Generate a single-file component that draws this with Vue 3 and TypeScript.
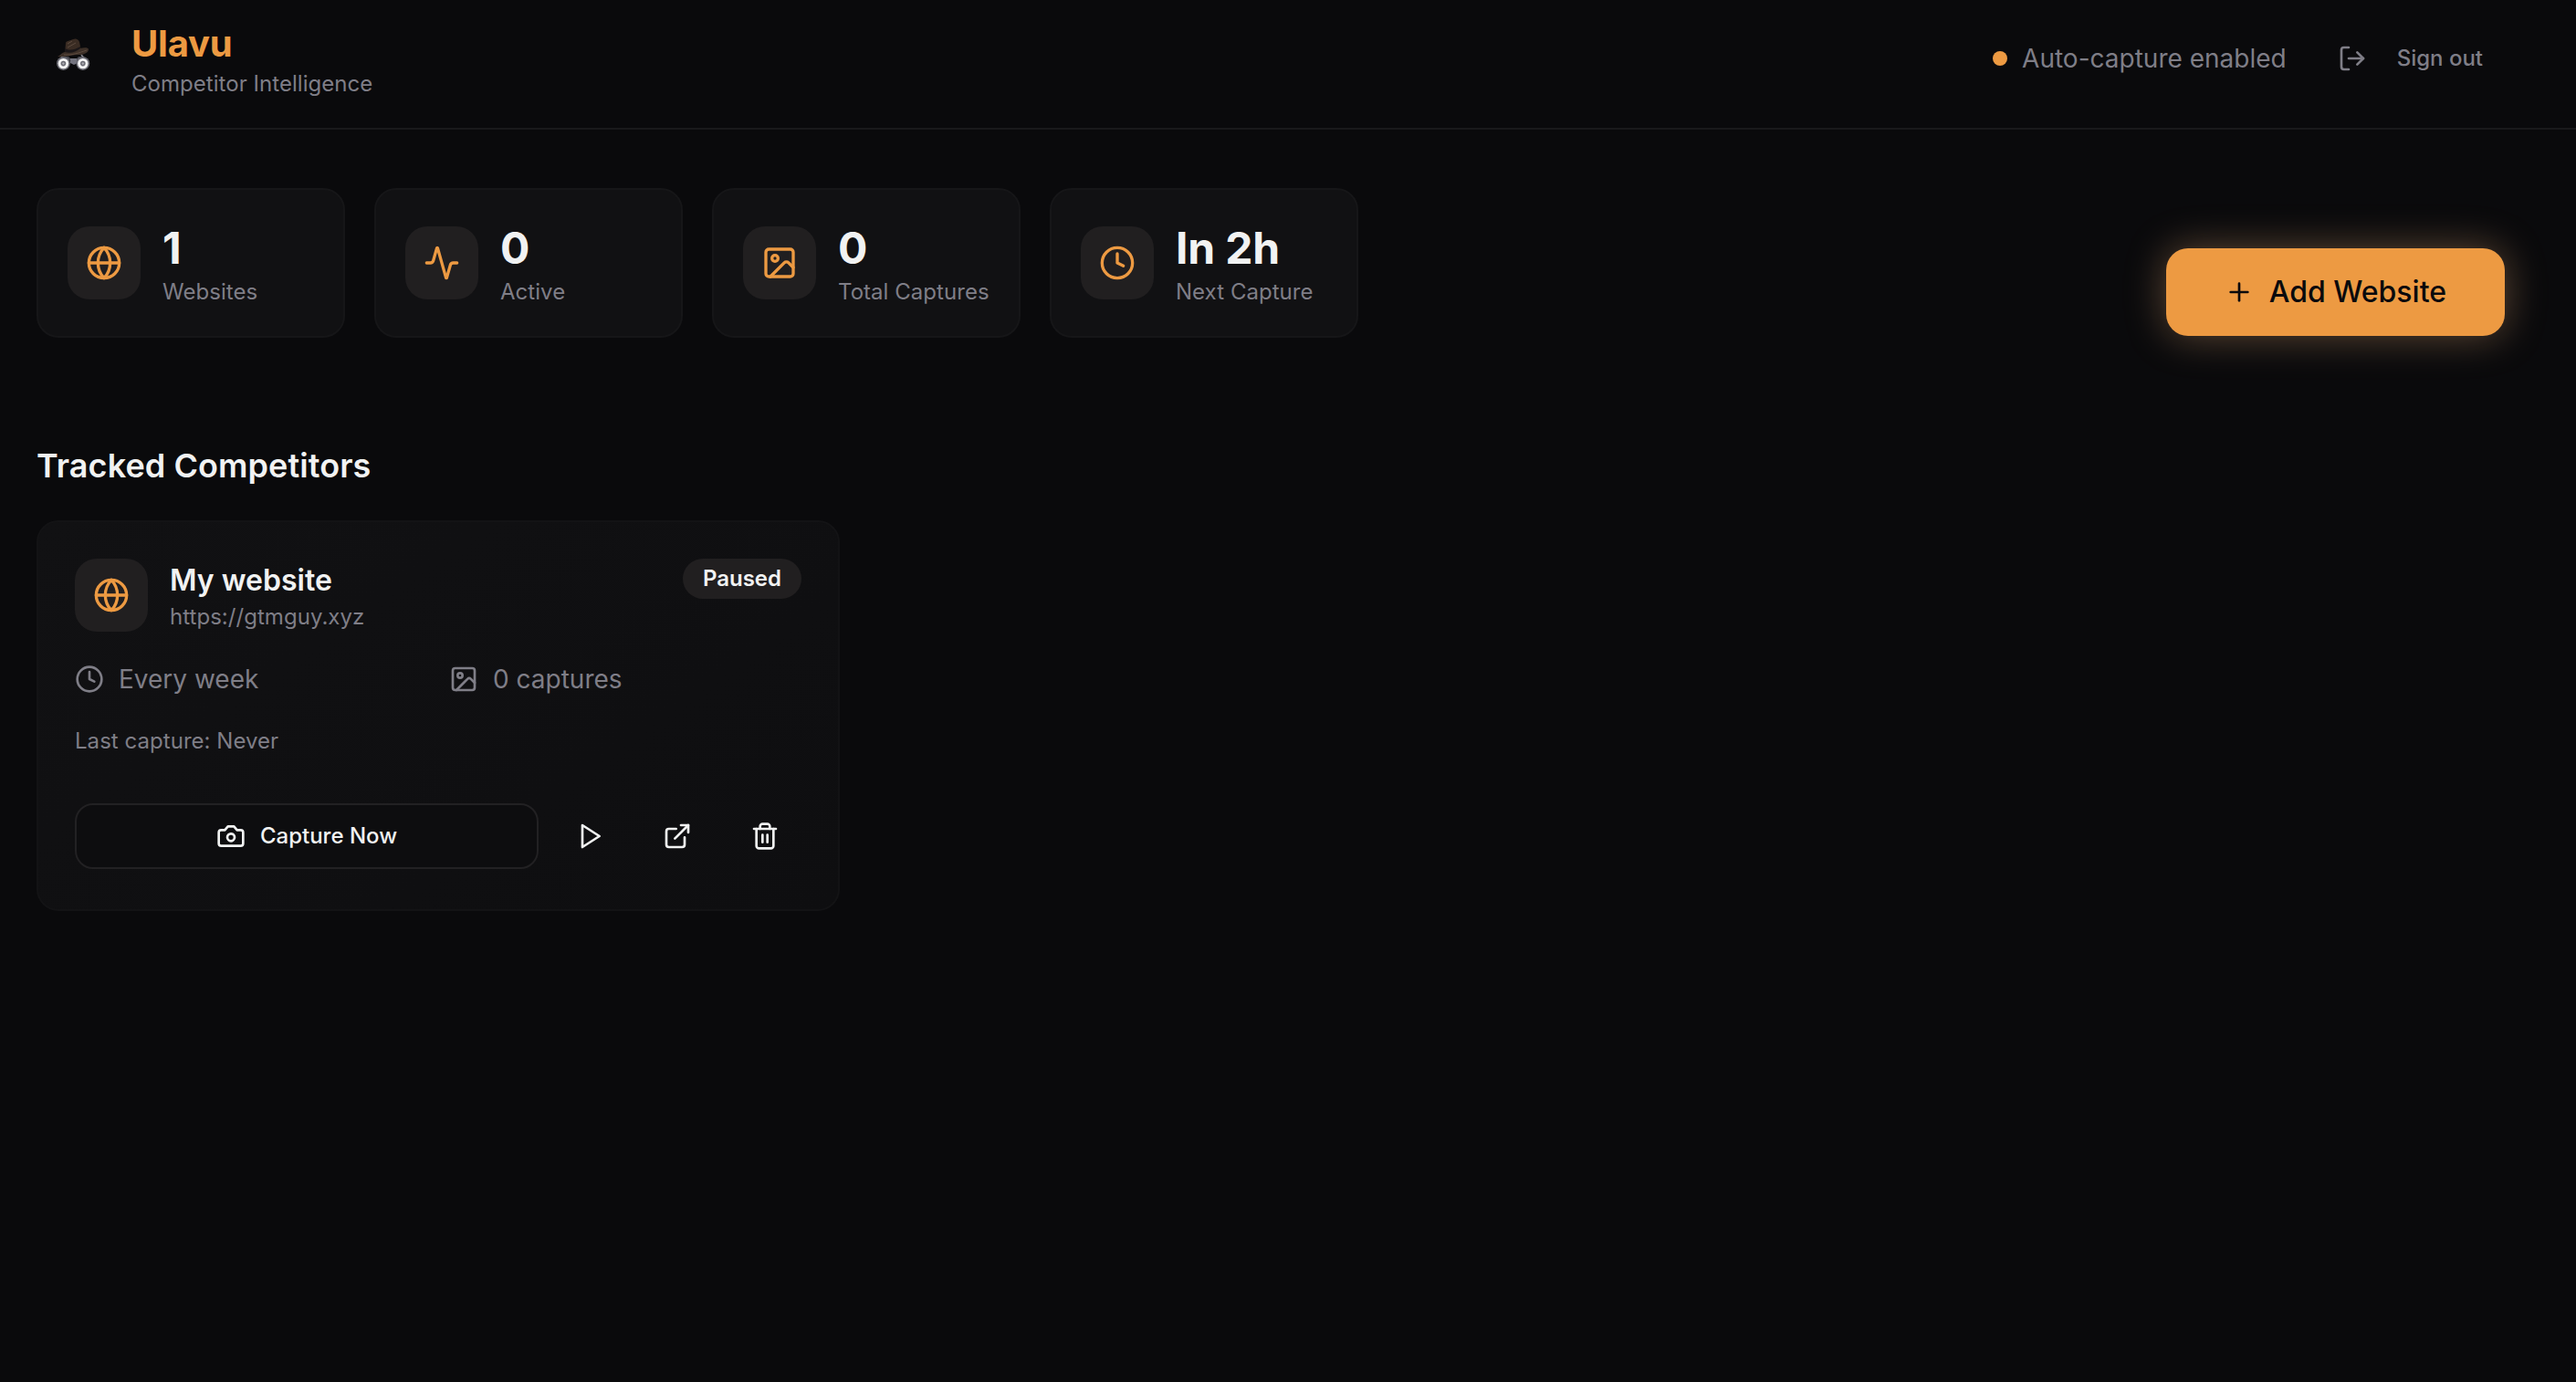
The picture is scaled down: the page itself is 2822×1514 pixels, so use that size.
<script setup lang="ts">
type IconName = 'globe' | 'activity' | 'image' | 'clock' | 'camera' | 'play' | 'external' | 'trash' | 'plus' | 'logout'

const icons: Record<IconName, string[]> = {
  globe: [
    'M12 2a10 10 0 1 0 0 20a10 10 0 1 0 0-20',
    'M12 2a14.5 14.5 0 0 0 0 20 14.5 14.5 0 0 0 0-20',
    'M2 12h20',
  ],
  activity: [
    'M22 12h-2.48a2 2 0 0 0-1.93 1.46l-2.35 8.36a.25.25 0 0 1-.48 0L9.24 2.18a.25.25 0 0 0-.48 0l-2.35 8.36A2 2 0 0 1 4.49 12H2',
  ],
  image: [
    'M5 3h14a2 2 0 0 1 2 2v14a2 2 0 0 1-2 2H5a2 2 0 0 1-2-2V5a2 2 0 0 1 2-2z',
    'M9 7a2 2 0 1 0 0 4a2 2 0 1 0 0-4',
    'm21 15-3.086-3.086a2 2 0 0 0-2.828 0L6 21',
  ],
  clock: ['M12 2a10 10 0 1 0 0 20a10 10 0 1 0 0-20', 'M12 6v6l4 2'],
  camera: [
    'M14.5 4h-5L7 7H4a2 2 0 0 0-2 2v9a2 2 0 0 0 2 2h16a2 2 0 0 0 2-2V9a2 2 0 0 0-2-2h-3l-2.5-3z',
    'M12 10a3 3 0 1 0 0 6a3 3 0 1 0 0-6',
  ],
  play: ['M6 3L20 12L6 21Z'],
  external: ['M15 3h6v6', 'M10 14 21 3', 'M18 13v6a2 2 0 0 1-2 2H5a2 2 0 0 1-2-2V8a2 2 0 0 1 2-2h6'],
  trash: [
    'M3 6h18',
    'M19 6v14c0 1-1 2-2 2H7c-1 0-2-1-2-2V6',
    'M8 6V4c0-1 1-2 2-2h4c1 0 2 1 2 2v2',
    'M10 11v6',
    'M14 11v6',
  ],
  plus: ['M5 12h14', 'M12 5v14'],
  logout: ['M9 21H5a2 2 0 0 1-2-2V5a2 2 0 0 1 2-2h4', 'M16 17l5-5-5-5', 'M21 12H9'],
}

const stats: { icon: IconName; value: string; label: string }[] = [
  { icon: 'globe', value: '1', label: 'Websites' },
  { icon: 'activity', value: '0', label: 'Active' },
  { icon: 'image', value: '0', label: 'Total Captures' },
  { icon: 'clock', value: 'In 2h', label: 'Next Capture' },
]

const actions: { icon: IconName; label: string }[] = [
  { icon: 'play', label: 'Resume' },
  { icon: 'external', label: 'Open' },
  { icon: 'trash', label: 'Delete' },
]
</script>

<template>
  <div class="page">
    <header class="header">
      <div class="brand">
        <svg class="logo" viewBox="0 0 80 80" aria-hidden="true">
          <path d="M23 44l5-6h7l3 3h5l3-3h6l5 7-4 5-6-6-4-2h-6l-4 2-5 5z" fill="#45454d" />
          <path d="M37 40h7l1 5-4 2-4-2z" fill="#74747f" />
          <path d="M29 37l-4 5M49 36l5 6" stroke="#85858e" stroke-width="1.6" />
          <path d="M31 35l1-12c1-3 5-2 8-4 3-1.500 6 0 7 3l2 10c-6 4-12 5-18 3z" fill="#3a2c23" />
          <path d="M31 29c6 3 12 1 17-2l1 4.500c-6 4-12 4.500-18 3z" fill="#1a1618" />
          <path d="M23 38c3-1 4-4 8-5 6 2 12 0 17-4 4-1 9-1 9 1 0 4-6 6-10 6-8 0-15 3-24 2z" fill="#3d3028" />
          <path d="M34 24l5-3M34 28l9-5M30 36c8 1 16-2 25-5" stroke="#5c4a3e" stroke-width="1" fill="none" />
          <g v-for="x in [29.4, 50.8]" :key="x">
            <circle :cx="x" cy="45.6" r="7.4" fill="#6a6a73" />
            <circle :cx="x" cy="45.6" r="5.7" fill="#f4f4f5" />
            <circle :cx="x" cy="45.6" r="2.8" fill="#6a6a73" />
            <circle :cx="x" cy="45.6" r="1.3" fill="#a9a9b0" />
          </g>
        </svg>
        <div>
          <h1 class="name">Ulavu</h1>
          <p class="small">Competitor Intelligence</p>
        </div>
      </div>
      <div class="session">
        <div class="status"><span class="dot"></span>Auto-capture enabled</div>
        <button class="signout">
          <svg class="icon" viewBox="0 0 24 24"><path v-for="d in icons.logout" :key="d" :d="d" /></svg>
          <span>Sign out</span>
        </button>
      </div>
    </header>

    <main class="main">
      <section class="overview">
        <div class="stats">
          <div v-for="s in stats" :key="s.label" class="stat">
            <div class="tile">
              <svg class="icon large" viewBox="0 0 24 24"><path v-for="d in icons[s.icon]" :key="d" :d="d" /></svg>
            </div>
            <div>
              <p class="value">{{ s.value }}</p>
              <p class="small">{{ s.label }}</p>
            </div>
          </div>
        </div>
        <button class="add">
          <svg class="icon" viewBox="0 0 24 24"><path v-for="d in icons.plus" :key="d" :d="d" /></svg>
          <span>Add Website</span>
        </button>
      </section>

      <h2 class="heading">Tracked Competitors</h2>

      <article class="card">
        <div class="card-head">
          <div class="tile">
            <svg class="icon large" viewBox="0 0 24 24"><path v-for="d in icons.globe" :key="d" :d="d" /></svg>
          </div>
          <div class="site">
            <h3 class="title">My website</h3>
            <p class="small">https://gtmguy.xyz</p>
          </div>
          <span class="badge">Paused</span>
        </div>
        <div class="meta">
          <div class="meta-item">
            <svg class="icon" viewBox="0 0 24 24"><path v-for="d in icons.clock" :key="d" :d="d" /></svg>
            <span>Every week</span>
          </div>
          <div class="meta-item">
            <svg class="icon" viewBox="0 0 24 24"><path v-for="d in icons.image" :key="d" :d="d" /></svg>
            <span>0 captures</span>
          </div>
        </div>
        <p class="small last">Last capture: Never</p>
        <div class="actions">
          <button class="capture">
            <svg class="icon" viewBox="0 0 24 24"><path v-for="d in icons.camera" :key="d" :d="d" /></svg>
            <span>Capture Now</span>
          </button>
          <button v-for="a in actions" :key="a.icon" class="action" :aria-label="a.label">
            <svg class="icon" viewBox="0 0 24 24"><path v-for="d in icons[a.icon]" :key="d" :d="d" /></svg>
          </button>
        </div>
      </article>
    </main>
  </div>
</template>

<style>
body {
  margin: 0;
  background: #0a0a0c;
}
</style>

<style scoped>
.page {
  min-height: 1514px;
  box-sizing: border-box;
  background: #0a0a0c;
  color: #f1f2f2;
  font-family: Inter, 'Liberation Sans', sans-serif;
  font-size: 28px;
  line-height: 40px;
}
.page * {
  box-sizing: border-box;
}
h1, h2, h3, p {
  margin: 0;
}
button {
  font: inherit;
  color: inherit;
  background: none;
  border: 0;
  padding: 0;
  white-space: nowrap;
}
.icon {
  width: 32px;
  height: 32px;
  flex: none;
  display: block;
  fill: none;
  stroke: currentColor;
  stroke-width: 2;
  stroke-linecap: round;
  stroke-linejoin: round;
}
.icon.large {
  width: 40px;
  height: 40px;
}
.small {
  font-size: 24px;
  line-height: 32px;
  letter-spacing: 0.04px;
  color: #7f7e87;
  white-space: nowrap;
}
.header {
  height: 142px;
  padding: 20px 78px 32px 40px;
  border-bottom: 2px solid #19191b;
  display: flex;
  align-items: center;
  justify-content: space-between;
}
.brand {
  display: flex;
  align-items: center;
  gap: 24px;
}
.logo {
  width: 80px;
  height: 80px;
  display: block;
}
.name {
  font-size: 40px;
  line-height: 56px;
  font-weight: 700;
  letter-spacing: -0.2px;
  color: #ed9a42;
}
.session {
  display: flex;
  align-items: center;
  gap: 56px;
  color: #7f7e87;
}
.status {
  display: flex;
  align-items: center;
  gap: 16px;
}
.dot {
  width: 16px;
  height: 16px;
  border-radius: 50%;
  background: #ed9a42;
}
.signout {
  display: flex;
  align-items: center;
  gap: 33px;
  padding-right: 24px;
  font-size: 24px;
  font-weight: 500;
}
.main {
  padding: 64px 78px 0 40px;
}
.overview {
  display: flex;
  align-items: flex-end;
  justify-content: space-between;
}
.stats {
  display: grid;
  grid-template-columns: repeat(4, 338px);
  gap: 32px;
}
.stat {
  height: 164px;
  padding: 32px;
  border: 2px solid #161618;
  border-radius: 24px;
  background: #111113;
  display: flex;
  align-items: center;
  gap: 24px;
}
.tile {
  width: 80px;
  height: 80px;
  flex: none;
  border-radius: 24px;
  background: #211f20;
  color: #ed9a42;
  display: flex;
  align-items: center;
  justify-content: center;
}
.value {
  font-size: 48px;
  line-height: 64px;
  font-weight: 700;
  letter-spacing: -0.2px;
  white-space: nowrap;
}
.add {
  height: 96px;
  padding: 0 64px;
  margin-bottom: 2px;
  border-radius: 24px;
  background: #ed9a42;
  color: #0a0a0c;
  font-size: 32px;
  font-weight: 500;
  display: flex;
  align-items: center;
  gap: 17px;
  box-shadow: 0 0 44px rgba(215, 160, 110, 0.42);
}
.heading {
  margin-top: 112px;
  font-size: 36px;
  line-height: 56px;
  font-weight: 600;
  letter-spacing: 0.08px;
}
.card {
  width: 880px;
  height: 428px;
  margin-top: 32px;
  padding: 40px;
  border: 2px solid #131315;
  border-radius: 24px;
  background: linear-gradient(145deg, #111113, #0e0e10);
}
.card-head {
  height: 80px;
  display: flex;
  align-items: flex-start;
  gap: 24px;
}
.site {
  flex: 1;
}
.title {
  font-size: 32px;
  line-height: 48px;
  font-weight: 600;
}
.badge {
  height: 44px;
  padding: 0 22px;
  border-radius: 22px;
  background: #211f20;
  font-size: 24px;
  line-height: 44px;
  font-weight: 600;
}
.meta {
  margin-top: 32px;
  display: grid;
  grid-template-columns: 1fr 1fr;
  gap: 24px;
  color: #7f7e87;
}
.meta-item {
  display: flex;
  align-items: center;
  gap: 16px;
}
.last {
  margin-top: 32px;
}
.actions {
  margin-top: 52px;
  display: flex;
  gap: 16px;
}
.capture {
  flex: 1;
  height: 72px;
  border: 2px solid #222123;
  border-radius: 20px;
  background: #0d0d0f;
  font-size: 24px;
  font-weight: 500;
  display: flex;
  align-items: center;
  justify-content: center;
  gap: 16px;
}
.action {
  width: 80px;
  height: 72px;
  display: flex;
  align-items: center;
  justify-content: center;
}
</style>
